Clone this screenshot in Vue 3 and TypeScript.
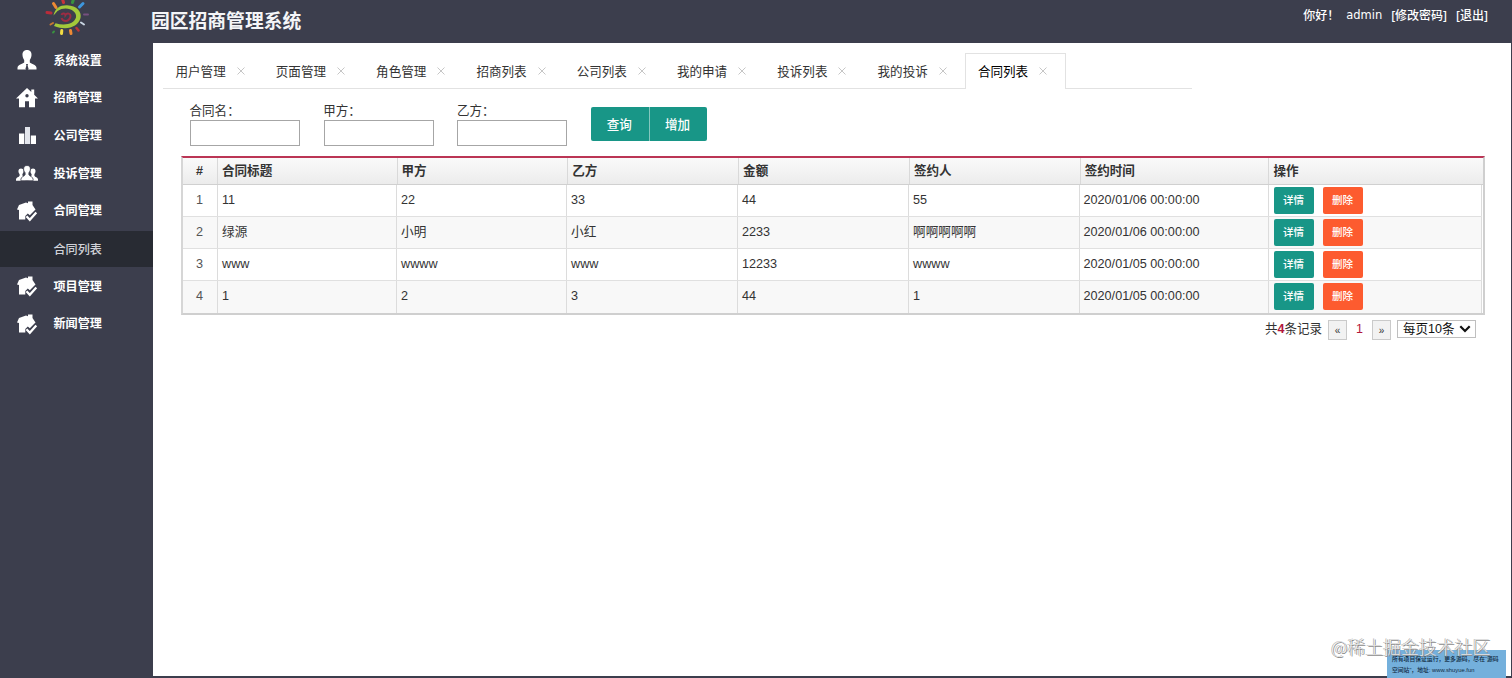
<script setup lang="ts">
import { ref } from 'vue'

interface MenuItem { label: string; icon: string; children?: string[] }
interface Contract { title: string; a: string; b: string; amount: string; signer: string; time: string }

const menu: MenuItem[] = [
  { label: '系统设置', icon: 'user' },
  { label: '招商管理', icon: 'home' },
  { label: '公司管理', icon: 'bars' },
  { label: '投诉管理', icon: 'group' },
  { label: '合同管理', icon: 'check', children: ['合同列表'] },
  { label: '项目管理', icon: 'check' },
  { label: '新闻管理', icon: 'check' },
]
const tabs = ['用户管理', '页面管理', '角色管理', '招商列表', '公司列表', '我的申请', '投诉列表', '我的投诉', '合同列表']
const activeTab = ref('合同列表')
const filters = ref([
  { label: '合同名：', value: '' },
  { label: '甲方：', value: '' },
  { label: '乙方：', value: '' },
])
const columns = ['#', '合同标题', '甲方', '乙方', '金额', '签约人', '签约时间', '操作']
const rows: Contract[] = [
  { title: '11', a: '22', b: '33', amount: '44', signer: '55', time: '2020/01/06 00:00:00' },
  { title: '绿源', a: '小明', b: '小红', amount: '2233', signer: '啊啊啊啊啊', time: '2020/01/06 00:00:00' },
  { title: 'www', a: 'wwww', b: 'www', amount: '12233', signer: 'wwww', time: '2020/01/05 00:00:00' },
  { title: '1', a: '2', b: '3', amount: '44', signer: '1', time: '2020/01/05 00:00:00' },
]
</script>

<template>
  <div class="page">
    <aside class="side">
      <div class="logo">
        <svg width="50" height="40" viewBox="0 0 50 40">
          <g stroke-width="3" stroke-linecap="round">
            <path d="M11.500 3.500l2.500 4" stroke="#ee8a34" />
            <path d="M20.500-1l1 3.500" stroke="#c8323a" />
            <path d="M31.500-1l-1 3.500" stroke="#38913f" />
            <path d="M41 3.500l-3.500 3.500" stroke="#3d96dc" />
            <path d="M46 14.500h-4" stroke="#76507f" stroke-width="2" />
            <path d="M42 24.500l-3-2" stroke="#c9d5e2" stroke-width="2" />
            <path d="M36.500 30.500l-2-2.500" stroke="#b93637" stroke-width="2.500" />
            <path d="M29 33.500l-.5-3" stroke="#ee8a34" />
            <path d="M19.500 33.500l.3-3" stroke="#f2dc43" />
            <path d="M11 32.500l1-1" stroke="#38913f" stroke-width="2" />
            <path d="M8.500 24.500l2.500-1.500" stroke="#c97832" stroke-width="2" />
            <path d="M5 12.500l4 .5" stroke="#b92c3a" />
          </g>
          <path d="M11.500 15.500C13 8 18 5 25 5.200C35 5.500 40 12 38.500 18C36 27 25 31 12 26L13.500 23.200C23 26 32 24 34 17.500C35.500 10.500 24 5 15.500 11Z" fill="#a3c93a" />
          <path d="M19.500 15c1-3 4-1 4 0c2-3 5-1 5 1s-2 5-4.500 5s-4-1.500-4.500-3" fill="none" stroke="#9c2c43" stroke-width="2" />
        </svg>
      </div>
      <nav>
        <template v-for="m in menu" :key="m.label">
          <div class="item">
            <svg v-if="m.icon === 'user'" class="ico" viewBox="0 0 22 22">
              <path d="M11 1c3.200 0 4.700 2.200 4.500 5.200c-.2 2.500-1.200 3.700-1.700 4.800v2.600c1.800 1.800 6.200 2 6.700 5.100v1.800h-19v-1.800c.5-3.100 4.900-3.300 6.700-5.100v-2.600C7.700 9.900 6.700 8.700 6.500 6.200C6.300 3.200 7.800 1 11 1z" fill="#fff" />
              <path d="M10 15h2l-.4 1.500l1 3.500l-1.600 1.700l-1.600-1.700l1-3.500z" fill="#3c3e4d" />
            </svg>
            <svg v-else-if="m.icon === 'home'" class="ico" viewBox="0 0 22 22">
              <path d="M11 1l4.300 4V2.500h2.900v5.300L22 11.500h-3v8.700h-6v-6H9v6H3v-8.700H0z" fill="#fff" />
              <circle cx="11" cy="8.700" r="1.700" fill="#3c3e4d" />
            </svg>
            <svg v-else-if="m.icon === 'bars'" class="ico" viewBox="0 0 22 22">
              <path d="M3 9.500h5.300v10.500H3z" fill="#fff" />
              <path d="M9 3h5v17H9z" fill="#e3e5ec" />
              <path d="M14.800 11.500H20V20h-5.200z" fill="#fff" />
            </svg>
            <svg v-else-if="m.icon === 'group'" class="ico" viewBox="0 0 22 22">
              <path d="M5 6.500c3 0 3.200 3.600 1.400 5.700v1.200l3 2.500v2.800H0v-1.500c.3-2 2.900-2 3.600-3.500v-1.500C1.900 10.100 2 6.500 5 6.500zM17 6.500c3 0 3.200 3.600 1.400 5.700v1.500c.7 1.500 3.300 1.500 3.600 3.500v1.500h-9.400v-2.800l3-2.500v-1.200C13.800 10.100 14 6.500 17 6.500z" fill="#fff" />
              <path d="M11 3.500c4.200 0 4 5 1.900 7.300v1.900c.8 1.800 4 1.900 4.200 4.500v1.500H4.900v-1.500c.2-2.600 3.400-2.700 4.200-4.500v-1.900C7 8.500 6.800 3.500 11 3.500z" fill="#fff" stroke="#3c3e4d" stroke-width=".8" />
            </svg>
            <svg v-else class="ico" viewBox="0 0 22 22">
              <path d="M1 9.500L3 5L10 2.500l2 .8V1.500h4.500V5L19.500 9.500L18 11l-4.200 4.200l-2-1.700L9.300 16v3.500H3V10z" fill="#fff" />
              <path d="M10.500 16.200l3.300 3.500l6.500-7.200" fill="none" stroke="#fff" stroke-width="2.300" />
            </svg>
            <span>{{ m.label }}</span>
          </div>
          <div v-for="c in m.children" :key="c" class="sub">{{ c }}</div>
        </template>
      </nav>
    </aside>

    <div class="right">
      <header class="top">
        <h1>园区招商管理系统</h1>
        <div class="account"><span class="hi">你好！</span><span class="name">admin</span><a>[修改密码]</a><a>[退出]</a></div>
      </header>
      <main class="main">
        <div class="tabs">
          <div v-for="t in tabs" :key="t" class="tab" :class="{ on: t === activeTab }" @click="activeTab = t">
            <span>{{ t }}</span>
            <svg width="8" height="8" viewBox="0 0 8 8"><path d="M.5.5l7 7M7.500.5l-7 7" stroke="#c6c6c6" stroke-width="1" /></svg>
          </div>
        </div>
        <div class="search">
          <label v-for="f in filters" :key="f.label"><span>{{ f.label }}</span><input v-model="f.value" type="text"></label>
          <div class="btns"><button>查询</button><button>增加</button></div>
        </div>
        <div class="table">
          <div class="thead">
            <div v-for="c in columns" :key="c">{{ c }}</div>
          </div>
          <div v-for="(r, i) in rows" :key="i" class="row">
            <div class="num">{{ i + 1 }}</div>
            <div>{{ r.title }}</div>
            <div>{{ r.a }}</div>
            <div>{{ r.b }}</div>
            <div>{{ r.amount }}</div>
            <div>{{ r.signer }}</div>
            <div>{{ r.time }}</div>
            <div class="ops"><button>详情</button><button class="del">删除</button></div>
          </div>
        </div>
        <div class="pager">
          <span>共<b>4</b>条记录</span>
          <i class="pg first">«</i><em>1</em><i class="pg">»</i>
          <div class="size">每页10条<svg width="12" height="8" viewBox="0 0 12 8"><path d="M1.300 1.300L6 6l4.700-4.700" fill="none" stroke="#111" stroke-width="2.200" /></svg></div>
        </div>
      </main>
    </div>
    <div class="mark">@稀土掘金技术社区</div>
    <div class="note"><div class="l1">所有项目保证运行，更多源码，尽在“源码</div><div class="l2">空间站”，地址: www.shuyue.fun</div></div>
  </div>
</template>

<style>
body { margin: 0; overflow: hidden; }
</style>

<style scoped>
.page {
  position: relative; display: flex; width: 1512px; height: 678px; overflow: hidden; box-sizing: border-box;
  background: #3c3e4d; font-family: "Liberation Sans", "Noto Sans CJK SC", sans-serif; font-size: 12.55px; color: #333;
}
.side { width: 153px; flex: none; color: #fff; }
.logo { height: 41px; padding-left: 42px; }
.logo svg { display: block; }
.item { display: flex; align-items: center; height: 37.600px; font-size: 12.100px; font-weight: 700; }
.ico { width: 22px; height: 22px; margin: 1px 16px 0 16px; flex: none; }
.item span { margin: -1px 0 0 -.5px; }
.sub { height: 35.500px; line-height: 38px; margin-top: 2.500px; padding-left: 53.500px; font-size: 12.100px; font-weight: 500; color: #d0d2d8; background: #282b33; }
.right { flex: 1; display: flex; flex-direction: column; }
.top { height: 43px; flex: none; display: flex; justify-content: space-between; }
h1 { margin: 0 0 0 -2px; font-size: 18.800px; line-height: 44px; font-weight: 700; color: #f4f5f8; }
.account { display: flex; height: 30px; line-height: 31px; margin-right: 24px; color: #fff; font-size: 12px; font-weight: 500; font-family: "Noto Sans", "Noto Sans CJK SC", sans-serif; }
.hi { width: 43px; }
.name { width: 45px; font-family: "DejaVu Sans", sans-serif; font-size: 11.500px; }
.account a + a { margin-left: 9px; }
.main { height: 632.500px; box-sizing: border-box; padding: 10px 0 0 10px; background: #fff; margin-right: 1px; }
.tabs { display: flex; width: 1029px; height: 36px; border-bottom: 1px solid #e2e2e2; box-sizing: border-box; }
.tab { width: 100.300px; flex: none; box-sizing: border-box; height: 36px; padding: 0 0 2px 11.500px; display: flex; align-items: center; border: 1px solid transparent; border-bottom: 0; }
.tab svg { margin: 1px 0 0 11px; }
.tab.on { color: #000; background: #fff; border-color: #e2e2e2; }
.search { display: flex; padding: 14px 0 0 27px; height: 53px; box-sizing: content-box; }
.search label { width: 133.700px; display: block; }
.search span { display: block; height: 17px; line-height: 17px; margin-left: -.5px; }
.search input { display: block; width: 110px; height: 26px; box-sizing: border-box; border: 1px solid #a6a6a6; margin: 0; padding: 0 4px; background: #fff; }
.btns { display: flex; padding-top: 4px; }
.btns button { width: 57.500px; height: 34px; border: 0; padding: 0 1px 2px 0; background: #189687; color: #fff; font: 500 12.550px "Noto Sans CJK SC", sans-serif; border-radius: 2px 0 0 2px; }
.btns button + button { width: 58px; margin-left: .5px; padding-right: 2px; border-left: 1px solid #84c7be; border-radius: 0 2px 2px 0; }
.table { width: 1304px; margin-left: 17.500px; box-sizing: border-box; border: 2px solid #cfcfcf; border-top: 2px solid #bb3555; border-left-color: #d6d6d6; height: 159px; }
.thead { display: grid; grid-template-columns: 35.500px 179.500px 170.800px 170.800px 170.800px 170.800px 188.800px 1fr; height: 27px; box-sizing: border-box; border-bottom: 1px solid #d0d0d0; background: linear-gradient(#fafafa, #ececec); font-weight: 700; line-height: 26px; }
.thead div { border-right: 1px solid #d9d9d9; padding-left: 4.500px; margin-left: -.5px; }
.thead div:first-child { padding: 0; text-align: center; }
.thead div:last-child { border: 0; }
.row { display: grid; grid-template-columns: 35.500px 179px 170px 171px 171px 170.500px 189px 1fr; height: 32.100px; margin-right: 1px; box-sizing: border-box; border-bottom: 1px solid #e0e0e0; font-size: 12.650px; line-height: 31px; background: #fff; }
.row:nth-child(odd) { background: #f8f8f8; }
.row:last-child { border-bottom: 0; }
.row div { border-right: 1px solid #dcdcdc; padding-left: 4.500px; margin-left: -.5px; }
.row .num { padding: 0; text-align: center; color: #555; }
.row .ops { display: flex; padding: 1.500px 0 0 5.500px; }
.ops button { width: 40px; height: 27px; padding: 0 0 2px; border: 0; border-radius: 2px; background: #189687; color: #fff; font: 500 10.500px "Noto Sans CJK SC", sans-serif; }
.ops .del { background: #fd5b2f; margin-left: 9px; }
.pager { display: flex; margin-left: 1102px; padding-top: 5px; height: 22px; line-height: 19px; }
.pager > span { width: 63px; white-space: nowrap; }
.pager b, .pager em { color: #b3163c; font-style: normal; }
.pg { width: 19px; height: 20px; box-sizing: border-box; border: 1px solid #cacaca; background: #f2f2f2; text-align: center; font-size: 10px; font-style: normal; line-height: 19px; }
.pager em { width: 25px; text-align: center; }
.size { display: flex; align-items: center; justify-content: space-between; box-sizing: border-box; width: 79px; height: 18px; margin-left: 6px; padding: 0 4px 0 5px; border: 1px solid #bfbfbf; color: #111; line-height: 16px; white-space: nowrap; }
.mark { position: absolute; left: 1331px; top: 633px; font: 300 17.900px/26px "Noto Sans CJK SC", sans-serif; color: rgba(255, 255, 255, .75); white-space: nowrap; text-shadow: 1px 1px 0 #8b8b8b, -.5px -.5px 0 #999; z-index: 2; }
.note { position: absolute; left: 1387px; top: 650px; width: 119px; height: 28px; box-sizing: border-box; padding: 4px 0 0 5px; background: #74b0dc; color: #102a42; font-size: 5.820px; font-weight: 500; line-height: 10.500px; white-space: nowrap; }
</style>
